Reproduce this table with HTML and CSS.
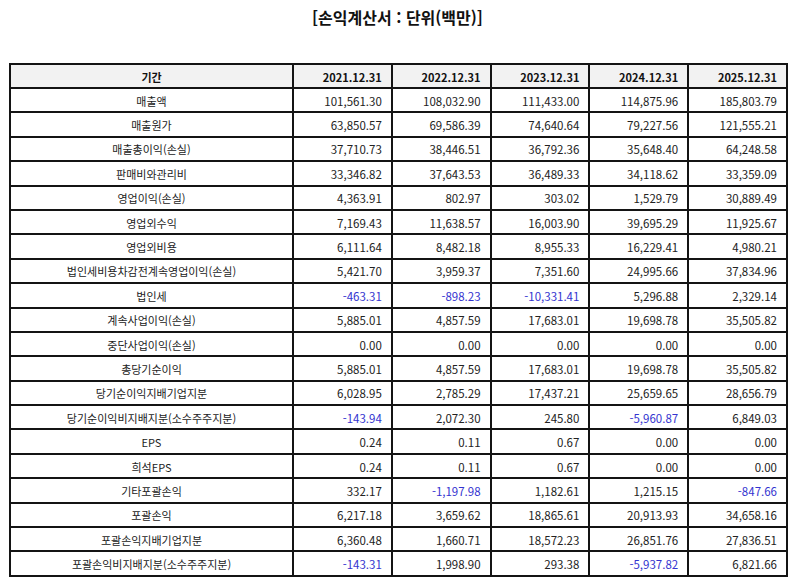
FILE: index.html
```html
<!DOCTYPE html>
<html lang="ko">
<head>
<meta charset="utf-8">
<title>손익계산서</title>
<link rel="stylesheet" href="styles.css">
</head>
<body>
<div class="page">
  <h1 class="title">[손익계산서 : 단위(백만)]</h1>
  <table class="report">
    <colgroup>
      <col class="c-label">
      <col class="c-num"><col class="c-num"><col class="c-num"><col class="c-num"><col class="c-num">
    </colgroup>
    <thead>
      <tr>
        <th class="label">기간</th>
        <th>2021.12.31</th>
        <th>2022.12.31</th>
        <th>2023.12.31</th>
        <th>2024.12.31</th>
        <th>2025.12.31</th>
      </tr>
    </thead>
    <tbody>
      <tr><td class="label">매출액</td><td>101,561.30</td><td>108,032.90</td><td>111,433.00</td><td>114,875.96</td><td>185,803.79</td></tr>
      <tr><td class="label">매출원가</td><td>63,850.57</td><td>69,586.39</td><td>74,640.64</td><td>79,227.56</td><td>121,555.21</td></tr>
      <tr><td class="label">매출총이익(손실)</td><td>37,710.73</td><td>38,446.51</td><td>36,792.36</td><td>35,648.40</td><td>64,248.58</td></tr>
      <tr><td class="label">판매비와관리비</td><td>33,346.82</td><td>37,643.53</td><td>36,489.33</td><td>34,118.62</td><td>33,359.09</td></tr>
      <tr><td class="label">영업이익(손실)</td><td>4,363.91</td><td>802.97</td><td>303.02</td><td>1,529.79</td><td>30,889.49</td></tr>
      <tr><td class="label">영업외수익</td><td>7,169.43</td><td>11,638.57</td><td>16,003.90</td><td>39,695.29</td><td>11,925.67</td></tr>
      <tr><td class="label">영업외비용</td><td>6,111.64</td><td>8,482.18</td><td>8,955.33</td><td>16,229.41</td><td>4,980.21</td></tr>
      <tr><td class="label">법인세비용차감전계속영업이익(손실)</td><td>5,421.70</td><td>3,959.37</td><td>7,351.60</td><td>24,995.66</td><td>37,834.96</td></tr>
      <tr><td class="label">법인세</td><td class="neg">-463.31</td><td class="neg">-898.23</td><td class="neg">-10,331.41</td><td>5,296.88</td><td>2,329.14</td></tr>
      <tr><td class="label">계속사업이익(손실)</td><td>5,885.01</td><td>4,857.59</td><td>17,683.01</td><td>19,698.78</td><td>35,505.82</td></tr>
      <tr><td class="label">중단사업이익(손실)</td><td>0.00</td><td>0.00</td><td>0.00</td><td>0.00</td><td>0.00</td></tr>
      <tr><td class="label">총당기순이익</td><td>5,885.01</td><td>4,857.59</td><td>17,683.01</td><td>19,698.78</td><td>35,505.82</td></tr>
      <tr><td class="label">당기순이익지배기업지분</td><td>6,028.95</td><td>2,785.29</td><td>17,437.21</td><td>25,659.65</td><td>28,656.79</td></tr>
      <tr><td class="label">당기순이익비지배지분(소수주주지분)</td><td class="neg">-143.94</td><td>2,072.30</td><td>245.80</td><td class="neg">-5,960.87</td><td>6,849.03</td></tr>
      <tr><td class="label">EPS</td><td>0.24</td><td>0.11</td><td>0.67</td><td>0.00</td><td>0.00</td></tr>
      <tr><td class="label">희석EPS</td><td>0.24</td><td>0.11</td><td>0.67</td><td>0.00</td><td>0.00</td></tr>
      <tr><td class="label">기타포괄손익</td><td>332.17</td><td class="neg">-1,197.98</td><td>1,182.61</td><td>1,215.15</td><td class="neg">-847.66</td></tr>
      <tr><td class="label">포괄손익</td><td>6,217.18</td><td>3,659.62</td><td>18,865.61</td><td>20,913.93</td><td>34,658.16</td></tr>
      <tr><td class="label">포괄손익지배기업지분</td><td>6,360.48</td><td>1,660.71</td><td>18,572.23</td><td>26,851.76</td><td>27,836.51</td></tr>
      <tr><td class="label">포괄손익비지배지분(소수주주지분)</td><td class="neg">-143.31</td><td>1,998.90</td><td>293.38</td><td class="neg">-5,937.82</td><td>6,821.66</td></tr>
    </tbody>
  </table>
</div>
</body>
</html>
```

FILE: styles.css
```css
html, body {
  margin: 0;
  padding: 0;
  background: #ffffff;
}

.page {
  padding: 0 8px 0 9px;
  font-family: "Noto Sans CJK KR", "Noto Sans", sans-serif;
  color: #222;
}

.title {
  margin: 0;
  height: 63px;
  padding-top: 5px;
  box-sizing: border-box;
  text-align: center;
  font-size: 16px;
  font-weight: bold;
  line-height: 24px;
  color: #111;
}

.report {
  width: 777px;
  border-collapse: collapse;
  table-layout: fixed;
  font-size: 11.5px;
}

.c-label { width: 283px; }
.c-num { width: 98.8px; }

.report th,
.report td {
  border: 2px solid #141414;
  padding: 1px 9px 0 4px;
  text-align: right;
  white-space: nowrap;
  line-height: 14px;
}

.report thead tr { height: 24px; }
.report tbody tr { height: 24.4px; }

.report th {
  background: #f2f2f2;
  font-weight: bold;
  font-size: 11px;
  color: #111;
}

.report .label {
  text-align: center;
  padding: 1px 4px 0;
  font-size: 11px;
}

.report td.neg {
  color: #3434d0;
}
```
